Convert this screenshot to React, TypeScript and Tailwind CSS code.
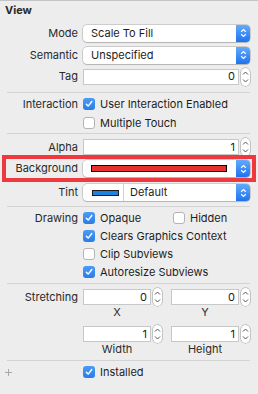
import React from "react";

const FONT = { fontFamily: "Inter, 'Noto Sans', sans-serif" };

function PopupArrows() {
  return (
    <svg width="7" height="10" viewBox="0 0 7 10" fill="none">
      <path d="M1.2 3.8 L3.5 1.6 L5.8 3.8" stroke="white" strokeWidth="1.2" />
      <path d="M1.2 6.2 L3.5 8.4 L5.8 6.2" stroke="white" strokeWidth="1.2" />
    </svg>
  );
}

function Popup({ children, pad = true }: { children: React.ReactNode; pad?: boolean }) {
  return (
    <div className="flex h-[17px] w-[167px] rounded-[4px] bg-white shadow-[0_0_0_0.5px_rgba(0,0,0,0.28),0_1px_1px_rgba(0,0,0,0.12)]">
      <div className={`flex min-w-0 flex-1 items-center text-[11px] text-[#1d1d1d] ${pad ? "pl-[8px]" : ""}`}>
        {children}
      </div>
      <div className="flex w-[14px] items-center justify-center rounded-r-[4px] bg-gradient-to-b from-[#62abfb] to-[#1c72ee]">
        <PopupArrows />
      </div>
    </div>
  );
}

function Stepper() {
  return (
    <div className="flex h-[18px] w-[9px] flex-col items-center justify-between rounded-full bg-white py-[3px] shadow-[0_0_0_0.5px_rgba(0,0,0,0.35)]">
      <svg width="7" height="4" viewBox="0 0 7 4" fill="none">
        <path d="M1 3.5 L3.5 1 L6 3.5" stroke="#555" strokeWidth="1" />
      </svg>
      <svg width="7" height="4" viewBox="0 0 7 4" fill="none">
        <path d="M1 0.5 L3.5 3 L6 0.5" stroke="#555" strokeWidth="1" />
      </svg>
    </div>
  );
}

function Field({ value, w }: { value: string; w: string }) {
  return (
    <div className={`flex items-center gap-[2px] ${w}`}>
      <div className="flex h-[16px] flex-1 items-center justify-end border border-[#c8c8c8] bg-white pr-[3px] text-[11px] text-[#1d1d1d]">
        {value}
      </div>
      <Stepper />
    </div>
  );
}

function Check({ on }: { on: boolean }) {
  return on ? (
    <div className="flex h-[12px] w-[12px] shrink-0 items-center justify-center rounded-[3px] bg-gradient-to-b from-[#4b9bf5] to-[#2a7ce8]">
      <svg width="8" height="8" viewBox="0 0 8 8" fill="none">
        <path d="M1.3 4.2 L3.2 6.1 L6.8 1.5" stroke="white" strokeWidth="1.4" strokeLinecap="round" strokeLinejoin="round" />
      </svg>
    </div>
  ) : (
    <div className="h-[12px] w-[12px] shrink-0 rounded-[3px] border border-[#b4b4b4] bg-white" />
  );
}

function CheckItem({ on, label }: { on: boolean; label: string }) {
  return (
    <div className="flex items-center gap-[5px] text-[11px] text-[#1d1d1d]">
      <Check on={on} />
      <span>{label}</span>
    </div>
  );
}

function Label({ children }: { children?: React.ReactNode }) {
  return <div className="w-[78px] shrink-0 text-right text-[11px] text-[#2a2a2a]">{children}</div>;
}

function Sep({ mt }: { mt: string }) {
  return <div className={`ml-[7px] mr-[8px] h-px bg-[#d3d3d3] ${mt}`} />;
}

export default function App() {
  return (
    <div style={FONT} className="h-[394px] w-[258px] overflow-hidden border-t border-[#c4c4c4] bg-[#ededed]">
      <div className="flex h-[18px] items-center pl-[5px] text-[11px] font-bold text-[#2a2a2a]">View</div>

      <div className="mt-[5px] flex h-[18px] items-center gap-[5px]">
        <Label>Mode</Label>
        <Popup>Scale To Fill</Popup>
      </div>
      <div className="mt-[4px] flex h-[18px] items-center gap-[5px]">
        <Label>Semantic</Label>
        <Popup>Unspecified</Popup>
      </div>
      <div className="mt-[4px] flex h-[17px] items-center gap-[5px]">
        <Label>Tag</Label>
        <Field value="0" w="w-[167px]" />
      </div>

      <Sep mt="mt-[7px]" />

      <div className="mt-[4px] flex h-[14px] items-center gap-[5px]">
        <Label>Interaction</Label>
        <CheckItem on label="User Interaction Enabled" />
      </div>
      <div className="mt-[5px] flex h-[14px] items-center gap-[5px]">
        <Label />
        <CheckItem on={false} label="Multiple Touch" />
      </div>

      <Sep mt="mt-[3px]" />

      <div className="mt-[5px] flex h-[16px] items-center gap-[5px]">
        <Label>Alpha</Label>
        <Field value="1" w="w-[167px]" />
      </div>

      <div className="relative mt-[5px] flex h-[17px] items-center gap-[5px]">
        <Label>Background</Label>
        <Popup>
          <div className="h-[7px] w-[136px] border border-black bg-[#e8302f]" />
        </Popup>
        {/* red highlight drawn over the row */}
        <div className="absolute left-[2px] top-[-5px] h-[27px] w-[254px] border-[4px] border-[#ee3a3e]" />
      </div>

      <div className="mt-[7px] flex h-[17px] items-center gap-[5px]">
        <Label>Tint</Label>
        <Popup pad={false}>
          <div className="flex h-full w-[41px] items-center border-r border-[#d0d0d0] pl-[9px]">
            <div className="h-[6px] w-[27px] border border-[#1b1b1b] bg-[#1a84e0]" />
          </div>
          <span className="pl-[6px]">Default</span>
        </Popup>
      </div>

      <Sep mt="mt-[5px]" />

      <div className="mt-[4px] flex h-[14px] items-center gap-[5px]">
        <Label>Drawing</Label>
        <div className="w-[85px]">
          <CheckItem on label="Opaque" />
        </div>
        <CheckItem on={false} label="Hidden" />
      </div>
      <div className="mt-[4px] flex h-[14px] items-center gap-[5px]">
        <Label />
        <CheckItem on label="Clears Graphics Context" />
      </div>
      <div className="mt-[4px] flex h-[14px] items-center gap-[5px]">
        <Label />
        <CheckItem on={false} label="Clip Subviews" />
      </div>
      <div className="mt-[4px] flex h-[14px] items-center gap-[5px]">
        <Label />
        <CheckItem on label="Autoresize Subviews" />
      </div>

      <Sep mt="mt-[4px]" />

      <div className="mt-[4px] flex h-[18px] items-center gap-[5px]">
        <Label>Stretching</Label>
        <div className="flex gap-[9px]">
          <Field value="0" w="w-[79px]" />
          <Field value="0" w="w-[79px]" />
        </div>
      </div>
      <div className="flex h-[12px] items-center gap-[5px] text-[11px] text-[#2a2a2a]">
        <Label />
        <div className="flex gap-[20px]">
          <div className="w-[68px] text-center">X</div>
          <div className="w-[68px] text-center">Y</div>
        </div>
      </div>
      <div className="mt-[7px] flex h-[18px] items-center gap-[5px]">
        <Label />
        <div className="flex gap-[9px]">
          <Field value="1" w="w-[79px]" />
          <Field value="1" w="w-[79px]" />
        </div>
      </div>
      <div className="flex h-[12px] items-center gap-[5px] text-[11px] text-[#2a2a2a]">
        <Label />
        <div className="flex gap-[20px]">
          <div className="w-[68px] text-center">Width</div>
          <div className="w-[68px] text-center">Height</div>
        </div>
      </div>

      <Sep mt="mt-[5px]" />

      <div className="mt-[4px] flex h-[14px] items-center">
        <div className="flex w-[83px] items-center pl-[5px]">
          <svg width="7" height="7" viewBox="0 0 7 7">
            <path d="M3.5 0 V7 M0 3.5 H7" stroke="#a8a8a8" strokeWidth="1" />
          </svg>
        </div>
        <CheckItem on label="Installed" />
      </div>
    </div>
  );
}
